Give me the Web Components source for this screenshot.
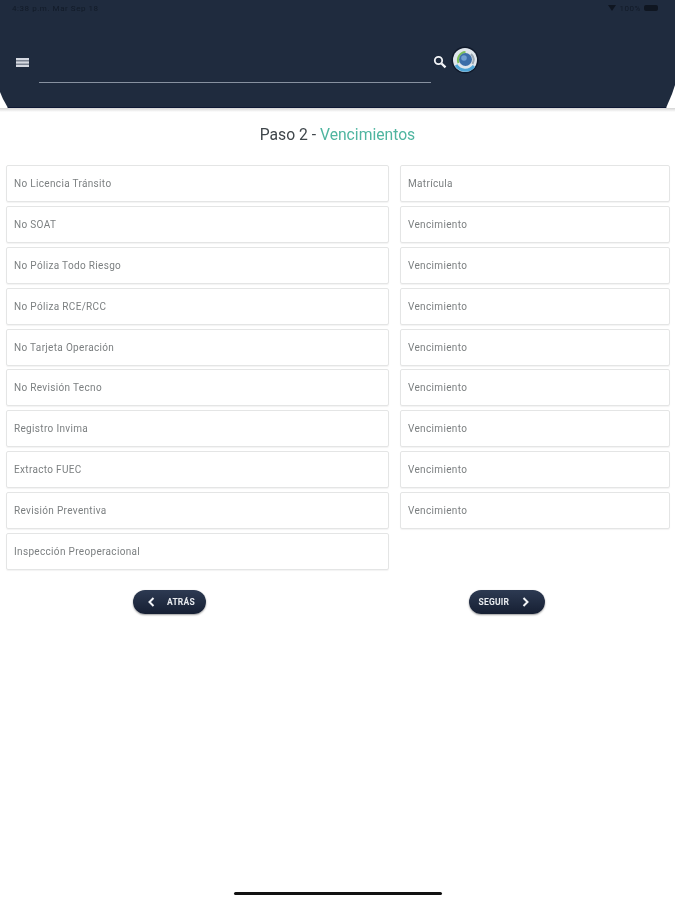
<!DOCTYPE html>
<html lang="es">
<head>
<meta charset="utf-8">
<title>Paso 2 - Vencimientos</title>
<style>
  html, body { margin: 0; background: #fff; }
  body { font-family: Roboto, "Liberation Sans", sans-serif; height: 900px; overflow: hidden; }
</style>
</head>
<body>
<app-page>
  <app-header></app-header>
  <step-title step="Paso 2 - " name="Vencimientos"></step-title>
  <field-grid>
    <form-field slot="left">No Licencia Tránsito</form-field>
    <form-field slot="left">No SOAT</form-field>
    <form-field slot="left">No Póliza Todo Riesgo</form-field>
    <form-field slot="left">No Póliza RCE/RCC</form-field>
    <form-field slot="left">No Tarjeta Operación</form-field>
    <form-field slot="left">No Revisión Tecno</form-field>
    <form-field slot="left">Registro Invima</form-field>
    <form-field slot="left">Extracto FUEC</form-field>
    <form-field slot="left">Revisión Preventiva</form-field>
    <form-field slot="left">Inspección Preoperacional</form-field>
    <form-field slot="right">Matrícula</form-field>
    <form-field slot="right">Vencimiento</form-field>
    <form-field slot="right">Vencimiento</form-field>
    <form-field slot="right">Vencimiento</form-field>
    <form-field slot="right">Vencimiento</form-field>
    <form-field slot="right">Vencimiento</form-field>
    <form-field slot="right">Vencimiento</form-field>
    <form-field slot="right">Vencimiento</form-field>
    <form-field slot="right">Vencimiento</form-field>
  </field-grid>
  <nav-row>
    <nav-button slot="back" dir="back">ATRÁS</nav-button>
    <nav-button slot="next" dir="next">SEGUIR</nav-button>
  </nav-row>
  <home-bar></home-bar>
</app-page>

<script>
class AppPage extends HTMLElement {
  constructor() {
    super();
    this.attachShadow({ mode: "open" }).innerHTML = `
      <style>
        /* the reference is a soft upscaled capture */
        :host { display: flex; flex-direction: column; height: 900px; filter: blur(.4px); }
      </style>
      <slot></slot>`;
  }
}

const headerTemplate = document.createElement("template");
headerTemplate.innerHTML = `
  <style>
    :host { display: block; height: 112px; background: linear-gradient(#d4d4d4, #fff) 0 108px / 100% 4px no-repeat; }
    .bar {
      height: 108px;
      box-sizing: border-box;
      background: #1f2b3e;
      border-bottom: 1px solid #0d1733;
      clip-path: polygon(0 0, 100% 0, 100% 85px, 672px 94px, 666px 100%, 8px 100%, 3px 99px, 0 92px);
      color: #0d1520;
      display: flex;
      flex-direction: column;
    }
    .status {
      height: 16px;
      padding: 0 17px 0 12px;
      display: flex;
      align-items: center;
      justify-content: space-between;
      font-size: 8px;
      letter-spacing: .55px;
      opacity: .75;
    }
    .status div { display: flex; align-items: center; gap: 3px; }
    .batt { width: 14px; height: 6px; border-radius: 2px; background: #0a0f18; }
    .tools {
      display: flex;
      align-items: flex-start;
      padding: 30px 0 0 16px;
    }
    .menu { margin-top: 12px; display: block; }
    .line { width: 392px; height: 36px; margin-left: 10px; border-bottom: 1px solid #8791a0; }
    .search { margin: 9px 0 0 2px; display: block; }
    .logo { margin: 0 0 0 4px; display: block; }
  </style>
  <div class="bar">
    <div class="status">
      <span>4:38 p.m.  Mar Sep 18</span>
      <div>
        <svg width="8" height="6" viewBox="0 0 8 6"><path d="M0 0h8L4 6z" fill="#0a0f18"/></svg>
        <span>100%</span>
        <span class="batt"></span>
      </div>
    </div>
    <div class="tools">
      <svg class="menu" width="13" height="9" viewBox="0 0 13 9"><path d="M0 0h13v2.400H0zM0 3.300h13v2.400H0zM0 6.600h13v2.400H0z" fill="#d5d9e1"/></svg>
      <div class="line"></div>
      <svg class="search" width="14" height="14" viewBox="0 0 14 14" fill="none" stroke="#f2f4f7">
        <circle cx="5.500" cy="5.500" r="3.700" stroke-width="1.800"/>
        <path d="M8.500 8.500l4 3.800" stroke-width="2.400"/>
      </svg>
      <svg class="logo" width="28" height="28" viewBox="0 0 28 28" fill="none">
        <circle cx="14" cy="14" r="13.500" fill="#10192a"/>
        <circle cx="14" cy="14" r="12" fill="#dfe6ec"/>
        <path d="M5 19a11 11 0 0 0 18 1" stroke="#4ea5d6" stroke-width="3"/>
        <path d="M7.500 17a8 8 0 0 1 7-11" stroke="#7cbf5a" stroke-width="2"/>
        <path d="M20 8a8.500 8.500 0 0 1 1.500 10" stroke="#9aa7b2" stroke-width="2"/>
        <circle cx="14.500" cy="13.500" r="6.500" fill="#3c6ea8"/>
        <circle cx="13" cy="12" r="2.800" fill="#6f9fd0"/>
      </svg>
    </div>
  </div>`;

class AppHeader extends HTMLElement {
  constructor() {
    super();
    this.attachShadow({ mode: "open" }).appendChild(headerTemplate.content.cloneNode(true));
  }
}

class StepTitle extends HTMLElement {
  constructor() {
    super();
    this.attachShadow({ mode: "open" }).innerHTML = `
      <style>
        :host { display: block; text-align: center; font-size: 15.700px; line-height: 20px; padding-top: 13px; height: 40px; color: #3f464b; }
        span { color: #4fb5a0; }
      </style>
      ${this.getAttribute("step")}<span>${this.getAttribute("name")}</span>`;
  }
}

class FieldGrid extends HTMLElement {
  constructor() {
    super();
    this.attachShadow({ mode: "open" }).innerHTML = `
      <style>
        :host { display: grid; grid-template-columns: 383px 270px; column-gap: 11px; padding: 0 5px 0 6px; }
        div { display: flex; flex-direction: column; gap: 3.900px; }
      </style>
      <div><slot name="left"></slot></div>
      <div><slot name="right"></slot></div>`;
  }
}

class FormField extends HTMLElement {
  constructor() {
    super();
    this.attachShadow({ mode: "open" }).innerHTML = `
      <style>
        :host {
          display: flex;
          align-items: center;
          box-sizing: border-box;
          height: 37px;
          padding: 0 7px;
          background: #fff;
          border: 1px solid #e4e5e5;
          border-radius: 2px;
          box-shadow: 0 1px 1px rgba(0, 0, 0, .05);
          font-size: 10px;
          letter-spacing: .33px;
          color: #7b7f80;
        }
      </style>
      <slot></slot>`;
  }
}

class NavRow extends HTMLElement {
  constructor() {
    super();
    this.attachShadow({ mode: "open" }).innerHTML = `
      <style>
        :host { display: grid; grid-template-columns: 1fr 1fr; justify-items: center; padding: 20px 0 0 1px; }
      </style>
      <slot name="back"></slot>
      <slot name="next"></slot>`;
  }
}

class NavButton extends HTMLElement {
  constructor() {
    super();
    const back = this.getAttribute("dir") === "back";
    const arrow = `<svg width="7" height="10" viewBox="0 0 7 10" fill="none" stroke="#f2f4f7" stroke-width="2"><path d="${back ? "M5.500 1L1.500 5l4 4" : "M1.500 1l4 4-4 4"}"/></svg>`;
    this.attachShadow({ mode: "open" }).innerHTML = `
      <style>
        :host {
          display: flex;
          align-items: center;
          box-sizing: border-box;
          height: 24px;
          width: ${back ? 73 : 76}px;
          padding-left: ${back ? 15 : 10}px;
          gap: ${back ? 12 : 13}px;
          border-radius: 12px;
          background: linear-gradient(#2d3a52, #161f33);
          box-shadow: 0 1px 2px rgba(0, 0, 0, .4);
          color: #e8ebef;
          font-size: 8.500px;
          font-weight: 700;
          letter-spacing: .2px;
        }
      </style>
      ${back ? arrow : ""}<slot></slot>${back ? "" : arrow}`;
  }
}

class HomeBar extends HTMLElement {
  constructor() {
    super();
    this.attachShadow({ mode: "open" }).innerHTML = `
      <style>
        :host { display: block; margin: auto auto 5px; width: 208px; height: 3px; border-radius: 2px; background: #111; }
      </style>`;
  }
}

customElements.define("app-page", AppPage);
customElements.define("app-header", AppHeader);
customElements.define("step-title", StepTitle);
customElements.define("field-grid", FieldGrid);
customElements.define("form-field", FormField);
customElements.define("nav-row", NavRow);
customElements.define("nav-button", NavButton);
customElements.define("home-bar", HomeBar);
</script>
</body>
</html>
